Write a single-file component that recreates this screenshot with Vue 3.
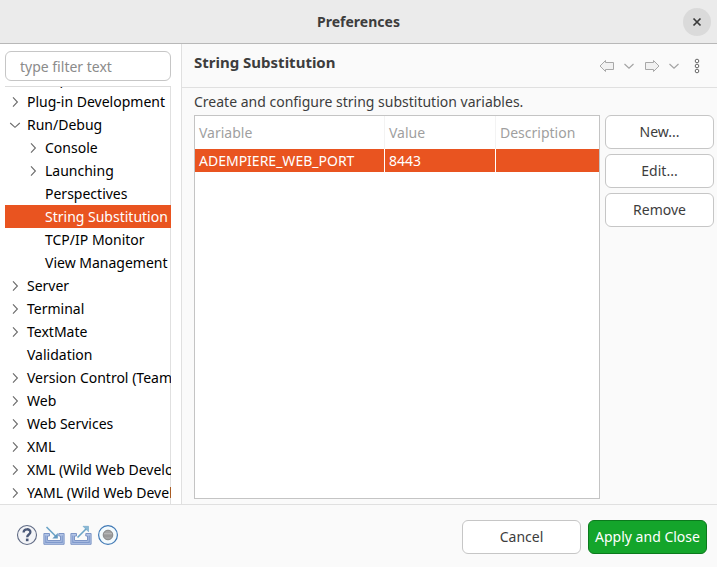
<script setup>
import { ref } from 'vue'

const filter = ref('')
const selected = ref('String Substitution')

const nodes = [
  { label: 'Oomph', level: 0, state: 'closed' },
  { label: 'Plug-in Development', level: 0, state: 'closed' },
  { label: 'Run/Debug', level: 0, state: 'open' },
  { label: 'Console', level: 1, state: 'closed' },
  { label: 'Launching', level: 1, state: 'closed' },
  { label: 'Perspectives', level: 1 },
  { label: 'String Substitution', level: 1 },
  { label: 'TCP/IP Monitor', level: 1 },
  { label: 'View Management', level: 1 },
  { label: 'Server', level: 0, state: 'closed' },
  { label: 'Terminal', level: 0, state: 'closed' },
  { label: 'TextMate', level: 0, state: 'closed' },
  { label: 'Validation', level: 0 },
  { label: 'Version Control (Team)', level: 0, state: 'closed' },
  { label: 'Web', level: 0, state: 'closed' },
  { label: 'Web Services', level: 0, state: 'closed' },
  { label: 'XML', level: 0, state: 'closed' },
  { label: 'XML (Wild Web Developer)', level: 0, state: 'closed' },
  { label: 'YAML (Wild Web Developer)', level: 0, state: 'closed' }
]

const variables = [{ name: 'ADEMPIERE_WEB_PORT', value: '8443', description: '' }]
</script>

<template>
  <div class="dialog">
    <header class="titlebar">
      <h1>Preferences</h1>
      <button class="close" aria-label="Close">
        <svg width="10" height="10" viewBox="0 0 10 10"><path d="M1.5 1.5l7 7M8.5 1.5l-7 7" stroke="#3a3a3a" stroke-width="1.7" /></svg>
      </button>
    </header>

    <div class="content">
      <nav class="sidebar">
        <input v-model="filter" class="filter" type="text" placeholder="type filter text" aria-label="type filter text" />
        <ul class="tree" role="tree">
          <li
            v-for="node in nodes"
            :key="node.label"
            class="node"
            :class="{ child: node.level === 1, selected: node.label === selected }"
            role="treeitem"
            :aria-selected="node.label === selected"
            @click="selected = node.label"
          >
            <button v-if="node.state" class="twisty" :aria-label="'Toggle ' + node.label">
              <svg width="12" height="12" viewBox="0 0 12 12" fill="none" stroke="#6a6a6a" stroke-width="1.1">
                <path v-if="node.state === 'open'" d="M1.2 4l4.8 4.3L10.8 4" />
                <path v-else d="M4 1.3l4.4 4.7L4 10.7" />
              </svg>
            </button>
            <span v-else class="twisty"></span>
            <span class="label">{{ node.label }}</span>
          </li>
        </ul>
      </nav>

      <main class="page">
        <div class="page-head">
          <h2>String Substitution</h2>
          <div class="history">
            <button class="tool" aria-label="Back">
              <svg width="16" height="16" viewBox="0 0 16 16"><path d="M1 8L6.5 2.5V4.5H14.5V11.5H6.5V13.5Z" fill="#f1f1f1" stroke="#a8a8a8" stroke-linejoin="round" /></svg>
            </button>
            <button class="tool" aria-label="Back history">
              <svg width="13" height="16" viewBox="0 0 13 16"><path d="M1.5 6L6 10.2L10.5 6" fill="none" stroke="#a3a3a3" stroke-width="1.2" /></svg>
            </button>
            <button class="tool" aria-label="Forward">
              <svg width="16" height="16" viewBox="0 0 16 16"><path d="M15 8L9.5 2.5V4.5H1.5V11.5H9.5V13.5Z" fill="#f1f1f1" stroke="#a8a8a8" stroke-linejoin="round" /></svg>
            </button>
            <button class="tool" aria-label="Forward history">
              <svg width="13" height="16" viewBox="0 0 13 16"><path d="M1.5 6L6 10.2L10.5 6" fill="none" stroke="#a3a3a3" stroke-width="1.2" /></svg>
            </button>
            <button class="tool more" aria-label="Menu">
              <svg width="6" height="16" viewBox="0 0 6 16" fill="#fff" stroke="#666"><circle cx="3" cy="3" r="1.8" /><circle cx="3" cy="8" r="1.8" /><circle cx="3" cy="13" r="1.8" /></svg>
            </button>
          </div>
        </div>

        <div class="page-body">
          <p>Create and configure string substitution variables.</p>
          <div class="columns">
            <div class="table-box">
              <table>
                <colgroup>
                  <col class="col-variable" />
                  <col class="col-value" />
                  <col />
                </colgroup>
                <thead>
                  <tr><th>Variable</th><th>Value</th><th>Description</th></tr>
                </thead>
                <tbody>
                  <tr v-for="item in variables" :key="item.name">
                    <td>{{ item.name }}</td>
                    <td>{{ item.value }}</td>
                    <td>{{ item.description }}</td>
                  </tr>
                </tbody>
              </table>
            </div>
            <div class="actions">
              <button class="btn">New...</button>
              <button class="btn">Edit...</button>
              <button class="btn">Remove</button>
            </div>
          </div>
        </div>
      </main>
    </div>

    <footer class="footer">
      <div class="footer-tools">
        <button class="tool" aria-label="Help">
          <svg width="22" height="22" viewBox="0 0 22 22">
            <circle cx="11" cy="11" r="9.5" fill="#f3f4f7" stroke="#606b85" stroke-width="1.1" />
            <path d="M7.6 8.6C7.6 4.2 14.4 4.3 14.4 8.1C14.4 10.5 11.2 10.5 11.2 13.2" fill="none" stroke="#4a5878" stroke-width="2.3" />
            <rect x="9.9" y="14.6" width="2.6" height="2.6" fill="#4a5878" />
          </svg>
        </button>
        <button class="tool" aria-label="Import">
          <svg width="22" height="22" viewBox="0 0 22 22">
            <path d="M6.5 9.5H.9V20.3H21.1V9.5H15.8V12H17.5V16.5H4.5V12H6.5Z" fill="#b3c5e6" stroke="#7d95c6" />
            <path d="M2.8 11.5V18.4H19.2V11.5" fill="none" stroke="#7f99cc" stroke-width="1.2" />
            <path d="M3.5 3L13 12.5" fill="none" stroke="#6ba3c6" stroke-width="1.6" />
            <path d="M14.8 9V14.5H9.3Z" fill="#6198c0" />
          </svg>
        </button>
        <button class="tool" aria-label="Export">
          <svg width="22" height="22" viewBox="0 0 22 22">
            <path d="M6.5 9.5H.9V20.3H21.1V9.5H15.8V12H17.5V16.5H4.5V12H6.5Z" fill="#b3c5e6" stroke="#7d95c6" />
            <path d="M2.8 11.5V18.4H19.2V11.5" fill="none" stroke="#7f99cc" stroke-width="1.2" />
            <path d="M7.5 13.5L17.5 3.5" fill="none" stroke="#6ba3c6" stroke-width="1.6" />
            <path d="M13 2.3H18.5V7.8Z" fill="#8ab8d4" stroke="#6ba3c6" stroke-width=".6" />
          </svg>
        </button>
        <button class="tool" aria-label="Record preferences">
          <svg width="22" height="22" viewBox="0 0 22 22">
            <circle cx="11" cy="11" r="9.4" fill="#f3fafd" stroke="#4079b5" stroke-width="1.2" />
            <circle cx="11" cy="11" r="4.8" fill="#a3a3a3" stroke="#858585" />
            <path d="M7 9.5H15" stroke="#b5b5b5" />
            <path d="M7 12H15" stroke="#8f8f8f" />
          </svg>
        </button>
      </div>
      <div class="footer-actions">
        <button class="btn">Cancel</button>
        <button class="btn primary">Apply and Close</button>
      </div>
    </footer>
  </div>
</template>

<style>
body {
  margin: 0;
}
</style>

<style scoped>
.dialog {
  display: flex;
  flex-direction: column;
  height: 100vh;
  background: #fafafa;
  color: #3d3d3d;
  font: 14px/22px "Noto Sans", sans-serif;
}
.dialog * {
  box-sizing: border-box;
}
button,
input {
  font: inherit;
  color: inherit;
}
.titlebar {
  display: grid;
  grid-template-columns: 1fr auto 1fr;
  align-items: center;
  height: 44px;
  padding: 0 6px;
  flex: none;
  background: #ebebeb;
  border-bottom: 1px solid #b8b8b8;
}
h1,
h2,
p {
  margin: 0;
}
h1 {
  grid-column: 2;
  font-size: 14px;
}
.close {
  display: flex;
  align-items: center;
  justify-content: center;
  justify-self: end;
  width: 28px;
  height: 28px;
  padding: 0;
  border: 0;
  border-radius: 50%;
  background: #dadada;
}
.content {
  display: flex;
  flex: 1;
  min-height: 0;
}
.sidebar {
  display: flex;
  flex-direction: column;
  gap: 5px;
  width: 182px;
  padding: 7px 10px 0 5px;
  flex: none;
  background: #fff;
  border-right: 1px solid #e0e0e0;
}
.filter {
  flex: none;
  width: 100%;
  height: 30px;
  padding: 0 14px;
  border: 1px solid #c6c6c6;
  border-radius: 6px;
  background: #fff;
}
.filter::placeholder {
  color: #8b8b8b;
  opacity: 1;
}
.tree {
  display: flex;
  flex-direction: column;
  justify-content: flex-end;
  flex: 1;
  min-height: 0;
  margin: 0;
  padding: 0;
  overflow: hidden;
  list-style: none;
  color: #000;
  border-top: 1px solid #dcdcdc;
  box-shadow: inset -1px 0 #e0e0e0;
}
.node {
  display: flex;
  align-items: center;
  gap: 6px;
  flex: none;
  height: 23px;
  padding-left: 4px;
  white-space: nowrap;
}
.child {
  padding-left: 22px;
}
.selected {
  background: #e95420;
  color: #fff;
}
.twisty {
  display: flex;
  flex: none;
  width: 12px;
  padding: 0;
  border: 0;
  background: none;
}
.page {
  display: flex;
  flex-direction: column;
  flex: 1;
  min-width: 0;
}
.page-head {
  display: flex;
  justify-content: space-between;
  height: 44px;
  padding: 7px 17px 0 12px;
  flex: none;
  border-bottom: 1px solid #e0e0e0;
}
h2 {
  font-size: 15px;
}
.history {
  display: flex;
  align-items: center;
  gap: 8px;
  height: 30px;
}
.tool {
  display: flex;
  padding: 0;
  border: 0;
  background: none;
}
.more {
  margin-left: 5px;
}
.page-body {
  display: flex;
  flex-direction: column;
  gap: 2px;
  flex: 1;
  min-height: 0;
  padding: 3px 3px 5px 12px;
}
.columns {
  display: flex;
  gap: 5px;
  flex: 1;
  min-height: 0;
}
.table-box {
  flex: 1;
  min-width: 0;
  overflow: hidden;
  border: 1px solid #c4c4c4;
  background: #fff;
}
table {
  width: 100%;
  table-layout: fixed;
  border-collapse: separate;
  border-spacing: 0;
}
.col-variable {
  width: 190px;
}
.col-value {
  width: 111px;
}
th,
td {
  padding: 0 4px;
  text-align: left;
  white-space: nowrap;
}
th {
  height: 33px;
  font-weight: 400;
  color: #9f9f9f;
}
td {
  height: 23px;
  background: #e95420;
  color: #fff;
}
th:not(:last-child) {
  border-right: 1px solid #f3f3f3;
}
td:not(:last-child) {
  border-right: 1px solid #fff;
}
.actions {
  display: flex;
  flex-direction: column;
  gap: 5px;
  width: 109px;
  flex: none;
}
.btn {
  height: 34px;
  padding: 0 5px;
  border: 1px solid #c6c6c6;
  border-radius: 6px;
  background: #fff;
  white-space: nowrap;
}
.footer {
  display: flex;
  align-items: flex-start;
  justify-content: space-between;
  height: 63px;
  padding: 15px 10px 0 16px;
  flex: none;
  border-top: 1px solid #e0e0e0;
}
.footer-tools {
  display: flex;
  align-items: center;
  gap: 5px;
  height: 30px;
}
.footer-actions {
  display: flex;
  gap: 7px;
}
.footer-actions .btn {
  width: 119px;
}
.footer-actions .primary {
  border-color: #0b7a1d;
  background: #14a52b;
  color: #fff;
}
</style>
